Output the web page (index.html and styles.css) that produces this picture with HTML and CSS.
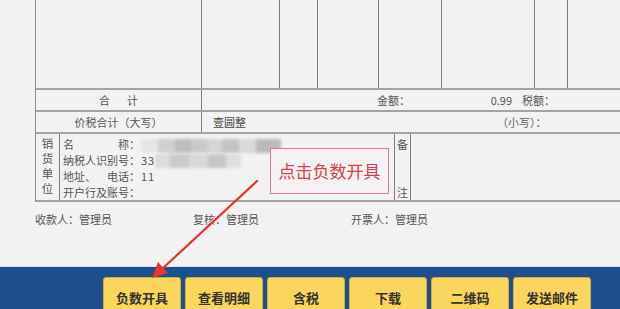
FILE: index.html
```html
<!DOCTYPE html>
<html lang="zh-CN">
<head>
<meta charset="utf-8">
<title>发票</title>
<link rel="stylesheet" href="styles.css">
</head>
<body>
<div class="page">
  <div class="invoice">
    <div class="items">
      <div class="col c1"></div>
      <div class="col c2"></div>
      <div class="col c3"></div>
      <div class="col c4"></div>
      <div class="col c5"></div>
      <div class="col c6"></div>
      <div class="col c7"></div>
      <div class="col c8"></div>
    </div>
    <div class="row total">
      <div class="lab heji"><span>合</span><span>计</span></div>
      <div class="vals">
        <span class="amt-l">金额：</span><span class="amt">0.99</span><span class="tax-l">税额：</span>
      </div>
    </div>
    <div class="row sum">
      <div class="lab">价税合计（大写）</div>
      <div class="vals">
        <span class="big">壹圆整</span><span class="small">（小写）：</span>
      </div>
    </div>
    <div class="row seller">
      <div class="vert">销<br>货<br>单<br>位</div>
      <div class="info">
        <div class="line"><span class="key split"><span>名</span><span>称：</span></span><span class="mosaic m1"></span></div>
        <div class="line"><span class="key">纳税人识别号：</span><span class="val">33</span><span class="mosaic m2"></span></div>
        <div class="line"><span class="key split"><span>地址、</span><span>电话：</span></span><span class="val">11</span></div>
        <div class="line"><span class="key">开户行及账号：</span></div>
      </div>
      <div class="memo-l"><span>备</span><span>注</span></div>
      <div class="memo"></div>
    </div>
  </div>
  <div class="sign">
    <span class="who">收款人：管理员</span>
    <span class="who">复核：管理员</span>
    <span class="who">开票人：管理员</span>
  </div>
  <div class="bar">
    <button class="btn">负数开具</button>
    <button class="btn">查看明细</button>
    <button class="btn">含税</button>
    <button class="btn">下载</button>
    <button class="btn">二维码</button>
    <button class="btn">发送邮件</button>
  </div>
  <div class="callout">点击负数开具</div>
  <svg class="arrow" width="620" height="309" viewBox="0 0 620 309">
    <line x1="257" y1="181" x2="162" y2="269" stroke="#e8332f" stroke-width="2.2" stroke-linecap="round"/>
    <polygon points="152,278 158,262 168,273" fill="#e8332f"/>
  </svg>
</div>
</body>
</html>
```

FILE: styles.css
```css
* { box-sizing: border-box; }
html, body {
  margin: 0;
  padding: 0;
  background: #f2f2f2;
}
body {
  width: 620px;
  height: 309px;
  overflow: hidden;
  font-family: "Noto Sans CJK SC", "Noto Sans", sans-serif;
  font-size: 11px;
  color: #555;
}
.page {
  position: relative;
  width: 620px;
  height: 309px;
  overflow: hidden;
}
.invoice {
  margin-left: 35px;
  width: 640px;
  border-left: 1px solid #8a8a8a;
}
.items {
  display: flex;
  height: 90px;
  border-bottom: 2px solid #a3a3a3;
}
.col {
  height: 100%;
  border-right: 1px solid #7d7d7d;
  flex: 0 0 auto;
}
.c1 { width: 166px; }
.c2 { width: 78px; }
.c3 { width: 38px; }
.c4 { width: 61px; }
.c5 { width: 63px; }
.c6 { width: 93px; }
.c7 { width: 33px; }
.c8 { flex: 1 1 auto; border-right: none; }

.row {
  display: flex;
  border-bottom: 2px solid #a3a3a3;
}
.total, .sum { height: 22px; }
.lab {
  flex: 0 0 166px;
  border-right: 1px solid #7d7d7d;
  display: flex;
  align-items: center;
  justify-content: center;
  line-height: 14px;
}
.heji { gap: 17px; }
.vals {
  flex: 1 1 auto;
  display: flex;
  align-items: center;
  line-height: 14px;
}
.amt-l { margin-left: 175px; }
.amt { width: 102px; text-align: right; }
.tax-l { margin-left: 10px; }
.big { margin-left: 11px; color: #444; }
.small { margin-left: 251px; color: #666; }

.seller { height: 68px; }
.vert {
  flex: 0 0 24px;
  border-right: 1px solid #7d7d7d;
  text-align: center;
  line-height: 15px;
  padding-top: 2px;
  font-size: 11.5px;
}
.info {
  flex: 0 0 335px;
  border-right: 1px solid #7d7d7d;
  padding: 2px 0 0 3px;
}
.line {
  display: flex;
  align-items: center;
  height: 16px;
  line-height: 16px;
}
.key {
  flex: 0 0 77px;
  white-space: nowrap;
}
.split {
  display: flex;
  justify-content: space-between;
}
.val { margin-left: 1px; letter-spacing: 1px; }
.mosaic {
  display: inline-block;
  height: 14px;
  filter: blur(1.5px);
}
.m1 {
  width: 140px;
  margin-left: 1px;
  margin-top: 4px;
  background:
    linear-gradient(90deg,
      #e6e6e6 0 12%, #cfcfcf 12% 24%, #bdbdbd 24% 36%, #c9c9c9 36% 48%,
      #d6d6d6 48% 58%, #c4c4c4 58% 70%, #dadada 70% 82%, #b9b9b9 82% 100%);
}
.m2 {
  width: 86px;
  margin-left: 0;
  margin-top: 2px;
  background:
    linear-gradient(90deg,
      #dcdcdc 0 18%, #cbcbcb 18% 40%, #d8d8d8 40% 62%, #c6c6c6 62% 82%, #dedede 82% 100%);
}
.memo-l {
  flex: 0 0 16px;
  border-right: 1px solid #7d7d7d;
  display: flex;
  flex-direction: column;
  justify-content: space-between;
  align-items: center;
  padding: 3px 0 1px;
  line-height: 14px;
}
.memo { flex: 1 1 auto; }

.sign {
  display: flex;
  height: 64px;
  padding: 10px 0 0 35px;
  line-height: 14px;
}
.who { flex: 0 0 158px; }

.bar {
  height: 43px;
  border-top: 1px solid #d5e1ec;
  background: #1b4f8f;
  display: flex;
  gap: 4px;
  padding: 10px 0 0 103px;
}
.btn {
  flex: 0 0 78px;
  height: 36px;
  margin: 0;
  padding: 6px 0 0;
  border: 1px solid #d3ac3f;
  border-radius: 3px;
  background: #fbd65c;
  font-family: "Noto Sans CJK SC", sans-serif;
  font-size: 13px;
  font-weight: 700;
  line-height: 18px;
  color: #333;
  text-align: center;
  vertical-align: top;
}

.callout {
  position: absolute;
  left: 270px;
  top: 148px;
  width: 119px;
  height: 46px;
  border: 1px solid #e27b88;
  background: #f4f2f2;
  color: #d73f4d;
  font-size: 17px;
  line-height: 44px;
  text-align: center;
}
.arrow {
  position: absolute;
  left: 0;
  top: 0;
  pointer-events: none;
}
```
